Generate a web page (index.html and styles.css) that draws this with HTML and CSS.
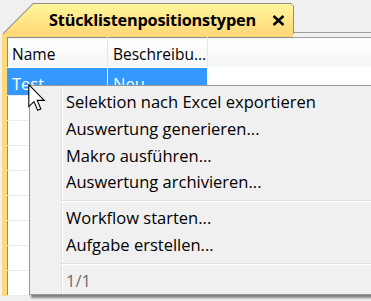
FILE: index.html
```html
<!DOCTYPE html>
<html lang="de">
  <head>
    <meta charset="UTF-8" />
    <title>Stücklistenpositionstypen</title>
    <link rel="stylesheet" href="styles.css">
  </head>
  <body>
    <div class="tabstrip">
      <div class="tab">
        <div class="tab-face">
          <span class="tab-title">Stücklistenpositionstypen</span>
          <svg class="tab-close" width="13" height="11" viewBox="0 0 13 11">
            <path d="M1.5 1 L11.5 10 M11.5 1 L1.5 10" stroke="#000" stroke-width="2.4" />
          </svg>
        </div>
      </div>
      <div class="strip-fill"></div>
    </div>
    <div class="frame-top">
      <div class="frame-top-tab"></div>
      <div class="frame-top-rest"></div>
    </div>
    <div class="frame">
      <table class="grid">
        <colgroup>
          <col class="col-name" />
          <col class="col-desc" />
          <col />
        </colgroup>
        <thead>
          <tr>
            <th class="h-name">Name</th>
            <th class="h-desc">Beschreibu...</th>
            <th class="col-fill"></th>
          </tr>
        </thead>
        <tbody>
          <tr class="selected first">
            <td class="c-name">Test</td>
            <td class="c-desc">Neu</td>
            <td class="col-fill"></td>
          </tr>
          <tr><td></td><td></td><td class="col-fill"></td></tr>
          <tr><td></td><td></td><td class="col-fill"></td></tr>
          <tr><td></td><td></td><td class="col-fill"></td></tr>
          <tr><td></td><td></td><td class="col-fill"></td></tr>
          <tr><td></td><td></td><td class="col-fill"></td></tr>
          <tr><td></td><td></td><td class="col-fill"></td></tr>
          <tr><td></td><td></td><td class="col-fill"></td></tr>
          <tr><td></td><td></td><td class="col-fill"></td></tr>
        </tbody>
      </table>
    </div>

    <div class="menu">
      <div class="menu-item">Selektion nach Excel exportieren</div>
      <div class="menu-item">Auswertung generieren...</div>
      <div class="menu-item">Makro ausführen...</div>
      <div class="menu-item">Auswertung archivieren...</div>
      <div class="menu-sep"></div>
      <div class="menu-item">Workflow starten...</div>
      <div class="menu-item">Aufgabe erstellen...</div>
      <div class="menu-sep"></div>
      <div class="menu-item disabled">1/1</div>
    </div>

    <svg class="cursor" width="18" height="28" viewBox="0 0 13 20.5">
      <path d="M0.5 0.5 L0.5 16.5 L4.3 12.9 L7 19.3 L9.3 18.3 L6.7 12 L11.8 12 Z"
        fill="#fff" stroke="#000" stroke-width="0.8" stroke-linejoin="miter" />
    </svg>
  </body>
</html>
```

FILE: styles.css
```css
html,
body {
  margin: 0;
  width: 371px;
  height: 301px;
  overflow: hidden;
}
body {
  background: #f0f0f0;
  font-family: "Open Sans", "Noto Sans", sans-serif;
  font-size: 16.5px;
  color: #000;
  position: relative;
}

/* tab strip */
.tabstrip {
  display: flex;
  height: 34px;
  padding-left: 3px;
  box-sizing: border-box;
  align-items: flex-end;
}
.tab {
  flex-shrink: 0;
  width: 291px;
  height: 31px;
  padding: 1px 1px 0 1px;
  box-sizing: border-box;
  background: #8e8e8e;
  clip-path: polygon(0 30px, 30px 0, calc(100% - 3px) 0, 100% 3px, 100% 100%, 0 100%);
}
.tab-face {
  height: 100%;
  display: flex;
  align-items: center;
  padding-left: 45px;
  background: linear-gradient(#fff79b, #ffe98a 45%, #ffd879);
  clip-path: polygon(0 29.4px, 29.4px 0, calc(100% - 2px) 0, 100% 2px, 100% 100%, 0 100%);
}
.tab-title {
  font-weight: bold;
  font-size: 16.3px;
  letter-spacing: -0.2px;
  padding-top: 1px;
}
.tab-close {
  flex-shrink: 0;
  margin-left: 16px;
  margin-top: 2px;
}
.strip-fill {
  flex: 1;
  height: 1px;
  background: #a0a0a0;
  margin-bottom: 1px;
}

/* yellow frame */
.frame-top {
  display: flex;
  height: 3px;
}
.frame-top-tab {
  width: 291px;
  margin-left: 2px;
  background: #ffd879;
}
.frame-top-rest {
  flex: 1;
  border-bottom: 1px solid #a0a0a0;
  box-sizing: border-box;
  height: 4px;
}
.frame {
  margin-left: 2px;
  border-left: 5px solid #ffd879;
}
.grid {
  border-collapse: collapse;
  width: 100%;
  background: #fff;
  border-top: 1px solid #8a8a8a;
  border-left: 1px solid #8a8a8a;
  table-layout: fixed;
}
.col-name,
.col-desc {
  width: 100px;
}
.grid th,
.grid td {
  padding: 0;
  text-align: left;
  font-weight: normal;
  white-space: nowrap;
  overflow: hidden;
  box-sizing: border-box;
}
.grid th {
  height: 30px;
  font-size: 15.5px;
  background: linear-gradient(#ffffff, #f4f5f6);
  border-right: 1px solid #e6e6e6;
  border-bottom: 1px solid #ffffff;
  padding-top: 3px;
}
.grid th.h-name {
  padding-left: 4px;
}
.grid th.h-desc {
  padding-left: 5px;
}
.grid td {
  height: 25px;
  border-right: 1px solid #ececec;
  border-bottom: 1px solid #ececec;
}
.grid td.col-fill,
.grid th.col-fill {
  border-right: none;
}
.grid tr.first td {
  height: 26px;
}
.grid tr.selected td {
  vertical-align: top;
  padding-top: 4px;
}
.grid tr.selected td.c-name,
.grid tr.selected td.c-desc {
  background: #3399ff;
  color: #fff;
  border-right-color: #ffffff;
}
.grid td.c-name {
  padding-left: 4px;
}
.grid td.c-desc {
  padding-left: 5px;
}

/* context menu */
.menu {
  position: absolute;
  left: 29px;
  top: 85px;
  width: 380px;
  padding-top: 3.4px;
  border: 1px solid #979797;
  background: linear-gradient(to right, #f0f0f0 31px, #e2e3e3 31px, #e2e3e3 32px, #ffffff 32px, #ffffff 33px, #f0f0f0 33px);
  box-shadow: 2px 3px 2px rgba(0, 0, 0, 0.45);
}
.menu-item {
  height: 26.7px;
  line-height: 26.7px;
  padding-left: 36px;
  white-space: nowrap;
}
.menu-item.disabled {
  color: #6d6d6d;
}
.menu-sep {
  height: 9px;
  margin-left: 31px;
  background: linear-gradient(transparent 4px, #e0e0e0 4px, #e0e0e0 5px, #ffffff 5px, #ffffff 6px, transparent 6px);
}

.cursor {
  position: absolute;
  left: 28px;
  top: 84px;
}
```
